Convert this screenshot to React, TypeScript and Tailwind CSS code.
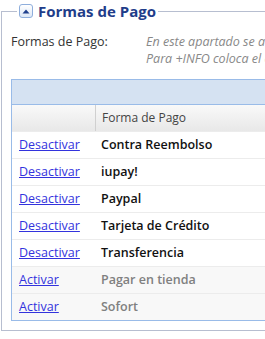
const rows = [
  { action: 'Desactivar', name: 'Contra Reembolso', active: true },
  { action: 'Desactivar', name: 'iupay!', active: true },
  { action: 'Desactivar', name: 'Paypal', active: true },
  { action: 'Desactivar', name: 'Tarjeta de Crédito', active: true },
  { action: 'Desactivar', name: 'Transferencia', active: true },
  { action: 'Activar', name: 'Pagar en tienda', active: false },
  { action: 'Activar', name: 'Sofort', active: false },
];

export default function App() {
  return (
    <div
      className="w-[265px] h-[339px] overflow-hidden bg-white"
      style={{ fontFamily: '"Open Sans", "Liberation Sans", sans-serif' }}
    >
      <fieldset className="ml-[1px] w-[600px] border border-[#b7bed0] pl-[9px] pr-2 pb-[9px]">
        <legend className="ml-[6px] flex items-center gap-[5px] px-[2px] h-[22px]">
          <span className="flex h-[14px] w-[14px] items-center justify-center rounded-[3px] border border-[#8eaedc] bg-gradient-to-b from-white to-[#dde8f6]">
            <svg width="8" height="5" viewBox="0 0 8 5">
              <path d="M4 0.5 L7.5 4.5 L0.5 4.5 Z" fill="#1f3f8c" />
            </svg>
          </span>
          <span className="text-[15px] font-bold leading-none text-[#1f3d8a]">Formas de Pago</span>
        </legend>

        <div className="flex pt-[11px] text-[12.5px] leading-[17px]">
          <div className="w-[135px] shrink-0 text-[#333]">Formas de Pago:</div>
          <div className="italic text-[#888]">
            <div>En este apartado se activan o desactivan las formas de pago.</div>
            <div>Para +INFO coloca el cursor sobre cada una.</div>
          </div>
        </div>

        <div className="mt-[12px] border border-[#99bbe8]">
          <div className="h-[25px] border-b border-[#99bbe8] bg-[#d5e2f2]" />
          <div className="flex h-[26px] bg-gradient-to-b from-[#f9f9f9] to-[#e8e8e8] text-[12px] text-[#444]">
            <div className="w-[84px] border-r border-[#d0d0d0]" />
            <div className="flex items-center pl-[6px]">Forma de Pago</div>
          </div>
          {rows.map(r => (
            <div
              key={r.name}
              className={`flex h-[27px] items-center border-t border-[#ececec] ${
                r.active ? 'bg-white' : 'bg-[#f8f8f8]'
              }`}
            >
              <div className="w-[89px] pl-[7px] text-[12.5px]">
                <a href="#" className="text-[#3333dd] underline">
                  {r.action}
                </a>
              </div>
              <div
                className={`text-[12.5px] font-semibold ${r.active ? 'text-[#111]' : 'text-[#808080]'}`}
              >
                {r.name}
              </div>
            </div>
          ))}
        </div>
      </fieldset>
    </div>
  );
}
